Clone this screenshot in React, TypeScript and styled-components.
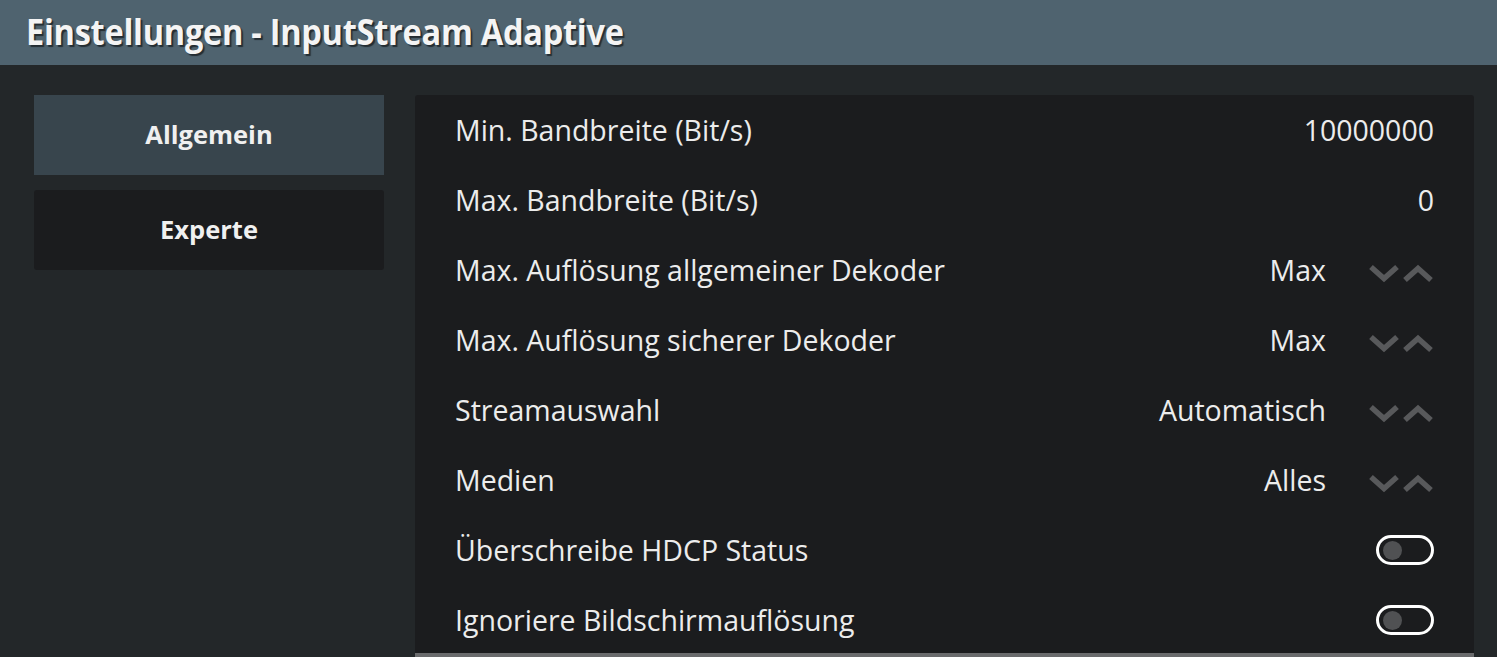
import React from "react";
import styled, { createGlobalStyle } from "styled-components";

const Global = createGlobalStyle`
  html, body { margin: 0; padding: 0; background: #232729; overflow: hidden; }
  body { font-family: "Open Sans", "Noto Sans", sans-serif; color: #ececec; }
  * { box-sizing: border-box; }
`;

const Page = styled.div`
  width: 1497px;
  height: 657px;
  display: flex;
  flex-direction: column;
  background: #232729;
  overflow: hidden;
`;

const Header = styled.header`
  height: 65px;
  flex: none;
  background: #4f636f;
  display: flex;
  align-items: center;
  padding-left: 26px;
`;

const Title = styled.h1`
  margin: 0;
  font-family: "Open Sans", "Noto Sans", sans-serif;
  font-weight: 700;
  font-size: 35px;
  color: #f4f4f4;
  letter-spacing: -0.3px;
  text-shadow: 2px 2px 1px rgba(0, 0, 0, 0.55);
  transform: scaleX(0.93);
  transform-origin: left center;
  white-space: nowrap;
  line-height: 1;
  margin-top: -2px;
`;

const Body = styled.div`
  flex: 1;
  display: flex;
  gap: 31px;
  padding: 30px 23px 0 34px;
  min-height: 0;
`;

const Sidebar = styled.nav`
  width: 350px;
  flex: none;
  display: flex;
  flex-direction: column;
  gap: 15px;
`;

const Tab = styled.div<{ $active?: boolean }>`
  height: 80px;
  display: flex;
  align-items: center;
  justify-content: center;
  background: ${(p) => (p.$active ? "#38454d" : "#1b1c1e")};
  border-radius: ${(p) => (p.$active ? "0" : "3px")};
  font-weight: 700;
  font-size: 25.5px;
  color: #f0f0f0;
  padding-bottom: 2px;
`;

const Panel = styled.section`
  flex: 1;
  display: flex;
  flex-direction: column;
  background: #1b1c1e;
  border-radius: 3px 3px 0 0;
  overflow: hidden;
`;

const Row = styled.div`
  height: 70px;
  flex: none;
  display: flex;
  align-items: center;
  padding: 0 40px;
  font-size: 28.5px;
  color: #ececec;
`;

const Label = styled.span`
  flex: 1;
  white-space: nowrap;
`;

const Value = styled.span`
  white-space: nowrap;
`;

const Spinner = styled.span`
  display: flex;
  align-items: center;
  gap: 2px;
  margin-left: 42px;
  height: 20px;
  margin-top: 6px;
`;

const Toggle = styled.span`
  width: 58px;
  height: 30px;
  border: 3px solid #ffffff;
  border-radius: 15px;
  display: flex;
  align-items: center;
  padding-left: 4px;
`;

const Knob = styled.span`
  width: 19px;
  height: 19px;
  border-radius: 50%;
  background: #505153;
`;

const FocusEdge = styled.div`
  height: 4px;
  margin-top: -2px;
  flex: none;
  background: #6a6b6d;
`;

const Chevron = ({ up }: { up?: boolean }) => (
  <svg width="32" height="19" viewBox="0 0 32 19">
    <polyline
      points={up ? "3,16 16,4.5 29,16" : "3,3 16,14.5 29,3"}
      fill="none"
      stroke="#58595b"
      strokeWidth="5.5"
      strokeLinejoin="miter"
    />
  </svg>
);

type Item =
  | { label: string; kind: "text"; value: string }
  | { label: string; kind: "spin"; value: string }
  | { label: string; kind: "toggle" };

const items: Item[] = [
  { label: "Min. Bandbreite (Bit/s)", kind: "text", value: "10000000" },
  { label: "Max. Bandbreite (Bit/s)", kind: "text", value: "0" },
  { label: "Max. Auflösung allgemeiner Dekoder", kind: "spin", value: "Max" },
  { label: "Max. Auflösung sicherer Dekoder", kind: "spin", value: "Max" },
  { label: "Streamauswahl", kind: "spin", value: "Automatisch" },
  { label: "Medien", kind: "spin", value: "Alles" },
  { label: "Überschreibe HDCP Status", kind: "toggle" },
  { label: "Ignoriere Bildschirmauflösung", kind: "toggle" },
];

export default function App() {
  return (
    <Page>
      <Global />
      <Header>
        <Title>Einstellungen - InputStream Adaptive</Title>
      </Header>
      <Body>
        <Sidebar>
          <Tab $active>Allgemein</Tab>
          <Tab>Experte</Tab>
        </Sidebar>
        <Panel>
          {items.map((it) => (
            <Row key={it.label}>
              <Label>{it.label}</Label>
              {it.kind === "text" && <Value>{it.value}</Value>}
              {it.kind === "spin" && (
                <>
                  <Value>{it.value}</Value>
                  <Spinner>
                    <Chevron />
                    <Chevron up />
                  </Spinner>
                </>
              )}
              {it.kind === "toggle" && (
                <Toggle>
                  <Knob />
                </Toggle>
              )}
            </Row>
          ))}
          <FocusEdge />
        </Panel>
      </Body>
    </Page>
  );
}
